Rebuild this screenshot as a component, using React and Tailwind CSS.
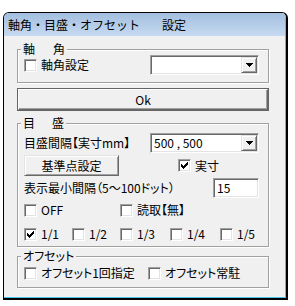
import React from 'react';

const font = { fontFamily: '"Noto Sans CJK JP", "Noto Sans", sans-serif' };

function Check({ checked }) {
  return (
    <span className="relative flex h-[13px] w-[13px] shrink-0 border border-t-[#a0a0a0] border-l-[#a0a0a0] border-r-white border-b-white bg-white shadow-[inset_1px_1px_0_#696969,inset_-1px_-1px_0_#e3e3e3]">
      {checked && (
        <svg width="7" height="7" viewBox="0 0 7 7" className="absolute left-[2px] top-[2px]" shapeRendering="crispEdges">
          <rect x="6" y="0" width="1" height="1" fill="#000" />
          <rect x="5" y="1" width="2" height="1" fill="#000" />
          <rect x="0" y="2" width="1" height="1" fill="#000" />
          <rect x="4" y="2" width="3" height="1" fill="#000" />
          <rect x="0" y="3" width="2" height="1" fill="#000" />
          <rect x="3" y="3" width="3" height="1" fill="#000" />
          <rect x="0" y="4" width="5" height="1" fill="#000" />
          <rect x="1" y="5" width="3" height="1" fill="#000" />
          <rect x="2" y="6" width="1" height="1" fill="#000" />
        </svg>
      )}
    </span>
  );
}

function CheckLabel({ checked, label, className = '' }) {
  return (
    <label className={`flex items-center gap-[4px] leading-[14px] ${className}`}>
      <Check checked={checked} />
      <span>{label}</span>
    </label>
  );
}

function Combo({ value, className = '' }) {
  return (
    <div className={`flex h-[20px] border border-t-[#a0a0a0] border-l-[#a0a0a0] border-r-white border-b-white bg-white shadow-[inset_1px_1px_0_#696969,inset_-1px_-1px_0_#e3e3e3] ${className}`}>
      <span className="flex-1 pl-[3px] pt-[1px] leading-[16px]">{value}</span>
      <span className="m-[1px] flex h-[16px] w-[16px] items-center justify-center border border-t-[#e3e3e3] border-l-[#e3e3e3] border-r-[#696969] border-b-[#696969] bg-[#f0f0f0] shadow-[inset_1px_1px_0_#fff,inset_-1px_-1px_0_#a0a0a0]">
        <svg width="7" height="4" viewBox="0 0 7 4" shapeRendering="crispEdges">
          <path d="M0 0h7v1H0zM1 1h5v1H1zM2 2h3v1H2zM3 3h1v1H3z" fill="#000" />
        </svg>
      </span>
    </div>
  );
}

function GroupBox({ label, className = '', children }) {
  return (
    <div className={`relative border border-[#a0a0a0] shadow-[inset_1px_1px_0_#fff,1px_1px_0_#fff] ${className}`}>
      <span className="absolute left-[3px] top-[-8px] flex bg-[#f0f0f0] px-[2px] leading-[14px]">{label}</span>
      {children}
    </div>
  );
}

export default function App() {
  return (
    <div className="min-h-screen bg-white pl-[3px] pt-[12px] text-[12px] text-black" style={font}>
      <div className="h-[288px] w-[285px] overflow-hidden rounded-t-[6px] border-l border-t border-r-2 border-b-2 border-black">
        <div className="flex h-full flex-col border-r border-b border-[#46c3ef]">
          <div className="flex h-[23px] items-center bg-gradient-to-b from-[#a3bedf] to-[#c6daf0] pl-[4px] text-[12px] leading-[14px]">
            <span>軸角・目盛・オフセット</span>
            <span className="ml-[22px]">設定</span>
          </div>

          <div className="flex flex-1 flex-col bg-[#f0f0f0] pl-[13px] [font-feature-settings:'palt']">
            <GroupBox
              label={
                <>
                  <span>軸</span>
                  <span className="ml-[18px]">角</span>
                </>
              }
              className="mt-[13px] w-[252px]"
            >
              <div className="flex items-center pl-[6px] pr-[9px] pt-[5px] pb-[7px]">
                <CheckLabel label="軸角設定" />
                <Combo value="" className="ml-auto w-[109px]" />
              </div>
            </GroupBox>

            <button className="mt-[5px] h-[23px] w-[252px] border border-[#646464] bg-[#f0f0f0] leading-[14px]">
              <span className="flex h-full w-full items-center justify-center border border-t-[#fff] border-l-[#fff] border-r-[#696969] border-b-[#696969] shadow-[inset_-1px_-1px_0_#a0a0a0]">
                Ok
              </span>
            </button>

            <GroupBox
              label={
                <>
                  <span>目</span>
                  <span className="ml-[17px]">盛</span>
                </>
              }
              className="mt-[12px] w-[252px]"
            >
              <div className="flex flex-col pl-[6px] pr-[9px] pt-[9px] pb-[5px]">
                <div className="flex items-center leading-[14px]">
                  <span>目盛間隔【実寸mm】</span>
                  <Combo value="500 , 500" className="ml-auto w-[109px]" />
                </div>
                <div className="mt-[2px] flex items-center">
                  <button className="h-[21px] w-[95px] border border-t-[#e3e3e3] border-l-[#e3e3e3] border-r-[#696969] border-b-[#696969] bg-[#f0f0f0] leading-[14px] shadow-[inset_1px_1px_0_#fff,inset_-1px_-1px_0_#a0a0a0]">
                    基準点設定
                  </button>
                  <CheckLabel checked label="実寸" className="ml-[59px]" />
                </div>
                <div className="mt-[2px] flex items-center leading-[14px]">
                  <span>表示最小間隔（5～100ドット）</span>
                  <span className="ml-auto flex h-[20px] w-[46px] items-center border border-t-[#a0a0a0] border-l-[#a0a0a0] border-r-white border-b-white bg-white pl-[3px] shadow-[inset_1px_1px_0_#696969,inset_-1px_-1px_0_#e3e3e3]">
                    15
                  </span>
                </div>
                <div className="mt-[5px] flex">
                  <CheckLabel label="OFF" className="w-[96px]" />
                  <CheckLabel label="読取【無】" />
                </div>
                <div className="mt-[10px] flex">
                  <CheckLabel checked label="1/1" className="w-[48px]" />
                  <CheckLabel label="1/2" className="w-[48px]" />
                  <CheckLabel label="1/3" className="w-[50px]" />
                  <CheckLabel label="1/4" className="w-[50px]" />
                  <CheckLabel label="1/5" />
                </div>
              </div>
            </GroupBox>

            <GroupBox label="オフセット" className="mt-[9px] w-[252px]">
              <div className="flex pl-[6px] pt-[9px] pb-[7px]">
                <CheckLabel label="オフセット1回指定" className="w-[124px]" />
                <CheckLabel label="オフセット常駐" />
              </div>
            </GroupBox>
          </div>
        </div>
      </div>
    </div>
  );
}
